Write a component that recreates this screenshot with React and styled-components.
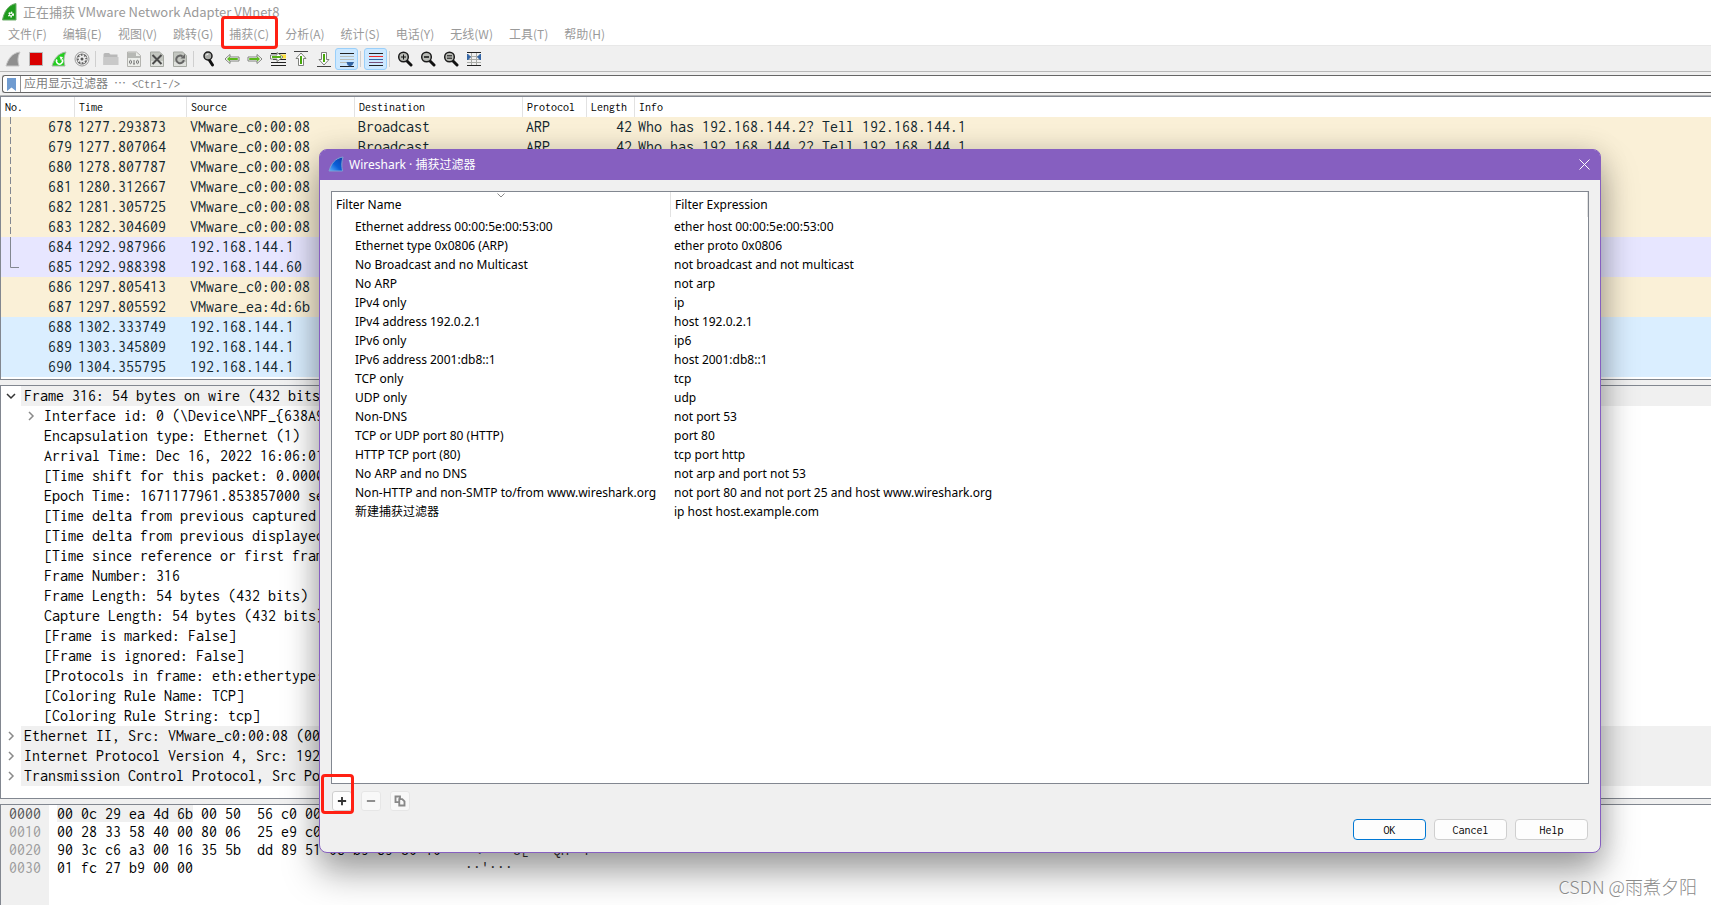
import React, { useState } from 'react'
import styled, { createGlobalStyle, css } from 'styled-components'

const font = {
  ui: '"Noto Sans", "Noto Sans CJK SC", sans-serif',
  cjk: '"Noto Sans CJK SC", sans-serif',
  mono: 'Inconsolata, "Noto Sans Mono CJK SC", "Liberation Mono", "Noto Sans CJK SC", monospace',
}

const color = {
  chrome: '#f0f0f0',
  frame: '#828790',
  purple: '#865fc0',
  faded: '#9a9a9a',
  mark: '#ff2013',
}

const rowColor = {
  arp: '#faf0d7',
  tcp: '#e7e6ff',
  udp: '#daeeff',
}

const menus = ['文件(F)', '编辑(E)', '视图(V)', '跳转(G)', '捕获(C)', '分析(A)', '统计(S)', '电话(Y)', '无线(W)', '工具(T)', '帮助(H)']

const arp = ['Broadcast', 'ARP', 42, 'Who has 192.168.144.2? Tell 192.168.144.1']

const packets = [
  { no: 678, time: '1277.293873', src: 'VMware_c0:00:08', kind: 'arp', link: 'dash', rest: arp },
  { no: 679, time: '1277.807064', src: 'VMware_c0:00:08', kind: 'arp', link: 'dash', rest: arp },
  { no: 680, time: '1278.807787', src: 'VMware_c0:00:08', kind: 'arp', link: 'dash' },
  { no: 681, time: '1280.312667', src: 'VMware_c0:00:08', kind: 'arp', link: 'dash' },
  { no: 682, time: '1281.305725', src: 'VMware_c0:00:08', kind: 'arp', link: 'dash' },
  { no: 683, time: '1282.304609', src: 'VMware_c0:00:08', kind: 'arp', link: 'dash' },
  { no: 684, time: '1292.987966', src: '192.168.144.1', kind: 'tcp', link: 'solid' },
  { no: 685, time: '1292.988398', src: '192.168.144.60', kind: 'tcp', link: 'end' },
  { no: 686, time: '1297.805413', src: 'VMware_c0:00:08', kind: 'arp' },
  { no: 687, time: '1297.805592', src: 'VMware_ea:4d:6b', kind: 'arp' },
  { no: 688, time: '1302.333749', src: '192.168.144.1', kind: 'udp' },
  { no: 689, time: '1303.345809', src: '192.168.144.1', kind: 'udp' },
  { no: 690, time: '1304.355795', src: '192.168.144.1', kind: 'udp' },
]

const details = [
  { text: 'Frame 316: 54 bytes on wire (432 bits)', open: true, top: true },
  { text: 'Interface id: 0 (\\Device\\NPF_{638A9', arrow: true },
  { text: 'Encapsulation type: Ethernet (1)' },
  { text: 'Arrival Time: Dec 16, 2022 16:06:01' },
  { text: '[Time shift for this packet: 0.0000' },
  { text: 'Epoch Time: 1671177961.853857000 sec' },
  { text: '[Time delta from previous captured' },
  { text: '[Time delta from previous displayed' },
  { text: '[Time since reference or first fram' },
  { text: 'Frame Number: 316' },
  { text: 'Frame Length: 54 bytes (432 bits)' },
  { text: 'Capture Length: 54 bytes (432 bits)' },
  { text: '[Frame is marked: False]' },
  { text: '[Frame is ignored: False]' },
  { text: '[Protocols in frame: eth:ethertype:' },
  { text: '[Coloring Rule Name: TCP]' },
  { text: '[Coloring Rule String: tcp]' },
  { text: 'Ethernet II, Src: VMware_c0:00:08 (00', arrow: true, top: true },
  { text: 'Internet Protocol Version 4, Src: 192', arrow: true, top: true },
  { text: 'Transmission Control Protocol, Src Po', arrow: true, top: true },
]

const hexRows = [
  { offset: '0000', picked: '00 0c 29 ea 4d 6b', bytes: ' 00 50  56 c0 00' },
  { offset: '0010', bytes: '00 28 33 58 40 00 80 06  25 e9 c0' },
  { offset: '0020', bytes: '90 3c c6 a3 00 16 35 5b  dd 89 51 08 b9 89 50 10', ascii: ' <    5[   QH  P' },
  { offset: '0030', bytes: '01 fc 27 b9 00 00', ascii: "··'···" },
]

const filters = [
  ['Ethernet address 00:00:5e:00:53:00', 'ether host 00:00:5e:00:53:00'],
  ['Ethernet type 0x0806 (ARP)', 'ether proto 0x0806'],
  ['No Broadcast and no Multicast', 'not broadcast and not multicast'],
  ['No ARP', 'not arp'],
  ['IPv4 only', 'ip'],
  ['IPv4 address 192.0.2.1', 'host 192.0.2.1'],
  ['IPv6 only', 'ip6'],
  ['IPv6 address 2001:db8::1', 'host 2001:db8::1'],
  ['TCP only', 'tcp'],
  ['UDP only', 'udp'],
  ['Non-DNS', 'not port 53'],
  ['TCP or UDP port 80 (HTTP)', 'port 80'],
  ['HTTP TCP port (80)', 'tcp port http'],
  ['No ARP and no DNS', 'not arp and port not 53'],
  ['Non-HTTP and non-SMTP to/from www.wireshark.org', 'not port 80 and not port 25 and host www.wireshark.org'],
  ['新建捕获过滤器', 'ip host host.example.com'],
]

const Icon = ({ children, size = 16 }) => (
  <svg width={size} height={size} viewBox="0 0 16 16" fill="none" aria-hidden="true">
    {children}
  </svg>
)

const finPath = 'M1 15C3 8 7 2 15 1C12.500 6 12.500 10 14 15Z'
const arrowPath = 'M1 8L6 3.500V6H15V10H6V12.500Z'
const arrowCore = 'M3.500 8L5.500 6.200V7.500H13.500V8.500H5.500V9.800Z'
const filePath = 'M1.500 1H10.500L14.500 4.500V15.500H1.500Z'

const Lens = ({ children }) => (
  <Icon>
    <path d="M10 10L14 14" stroke="#111" strokeWidth="3" strokeLinecap="round" />
    <circle cx="6.500" cy="6" r="4.800" fill="#b9bbb6" stroke="#1c1c1c" strokeWidth="1.500" />
    {children}
  </Icon>
)

const icons = {
  start: (
    <Icon>
      <path d={finPath} fill="#8f8f8f" stroke="#c6c6c6" />
    </Icon>
  ),
  stop: (
    <Icon>
      <rect x="1.500" y="1.500" width="13" height="13" fill="#d90000" stroke="#b9b9b9" />
    </Icon>
  ),
  restart: (
    <Icon>
      <path d={finPath} fill="#22cf1d" stroke="#a9b6a8" />
      <path d="M6 8.500A3 3 0 1 0 11 8.500" stroke="#fff" strokeWidth="1.500" />
      <path d="M8.500 5.500L12 6L10 9.500Z" fill="#fff" />
    </Icon>
  ),
  options: (
    <Icon>
      <circle cx="8" cy="8" r="7" fill="#f4f4f4" stroke="#9a9a9a" />
      <circle cx="8" cy="8" r="5.500" fill="#666" />
      <circle cx="8" cy="8" r="3.200" fill="#eee" />
      <circle cx="8" cy="8" r="4" stroke="#eee" strokeWidth="1.500" strokeDasharray="1.600 1.540" />
      <circle cx="8" cy="8" r="1.500" fill="#555" />
    </Icon>
  ),
  open: (
    <Icon>
      <path d="M0.500 3.500Q0.500 2 2 2H6L7.500 3.500H14.500V14H0.500Z" fill="#b8b8b8" />
      <path d="M0.500 6H15.500V14H0.500Z" fill="#c9c9c9" />
    </Icon>
  ),
  save: (
    <Icon>
      <path d={filePath} fill="#eceeea" stroke="#b4b4b0" />
      <path d="M2 1.500H10V5H14V7H2Z" fill="#b7b9b5" />
      <ellipse cx="4.500" cy="11" rx="1" ry="1.700" stroke="#777" />
      <path d="M8 9V13M7 13H9" stroke="#777" />
      <ellipse cx="11.500" cy="11" rx="1" ry="1.700" stroke="#777" />
    </Icon>
  ),
  close: (
    <Icon>
      <path d={filePath} fill="#c3c6c0" stroke="#a5a8a2" />
      <path d="M2 10H14V15H2Z" fill="#dfe1dd" />
      <path d="M3.500 4L12.500 13M12.500 4L3.500 13" stroke="#4b4b4b" strokeWidth="2" />
    </Icon>
  ),
  reload: (
    <Icon>
      <path d={filePath} fill="#c3c6c0" stroke="#a5a8a2" />
      <path d="M2 11H14V15H2Z" fill="#dfe1dd" />
      <path d="M10.500 5.500A3.800 3.800 0 1 0 11.800 9" stroke="#666" strokeWidth="2" />
      <path d="M8.500 7.500H13V3Z" fill="#666" />
    </Icon>
  ),
  find: (
    <Icon>
      <path d="M8 8.500L11.500 14" stroke="#111" strokeWidth="3" strokeLinecap="round" />
      <circle cx="7" cy="5" r="4" fill="#a9aba7" stroke="#1c1c1c" strokeWidth="1.500" />
      <path d="M5 4.500Q5.500 3 7.500 3" stroke="#fff" />
    </Icon>
  ),
  back: (
    <Icon>
      <path d={arrowPath} fill="#fff" stroke="#7f817d" />
      <path d={arrowCore} fill="#48a80c" stroke="#5cb81c" />
    </Icon>
  ),
  forward: (
    <Icon>
      <g transform="rotate(180 8 8)">
        <path d={arrowPath} fill="#fff" stroke="#7f817d" />
        <path d={arrowCore} fill="#48a80c" stroke="#5cb81c" />
      </g>
    </Icon>
  ),
  goto: (
    <Icon>
      <path d="M1 2.500H16M1 11.500H16M1 14.500H16M3 8.500H16" stroke="#222" />
      <path d="M10 5.500H16" stroke="#ffe23c" strokeWidth="4" />
      <path d="M0.500 4H7V1.500L13 6L7 10.500V8H0.500Z" fill="#fff" stroke="#7f817d" />
      <path d="M2 6H11" stroke="#55b315" strokeWidth="2" />
    </Icon>
  ),
  first: (
    <Icon>
      <path d="M1 0.500H15" stroke="#444" />
      <path d="M8 2L13 7.500H10.500V14.500H5.500V7.500H3Z" fill="#fff" stroke="#7f817d" />
      <path d="M8 5V13" stroke="#48a80c" strokeWidth="2" />
    </Icon>
  ),
  last: (
    <Icon>
      <path d="M1 15.500H15" stroke="#444" />
      <path d="M8 14L13 8.500H10.500V1.500H5.500V8.500H3Z" fill="#fff" stroke="#7f817d" />
      <path d="M8 3V11" stroke="#48a80c" strokeWidth="2" />
    </Icon>
  ),
  scroll: (
    <Icon>
      <path d="M1 2.500H15M1 15.500H15" stroke="#222" />
      <path d="M1 5.500H15M1 8.500H15M1 11.500H15" stroke="#babdb6" />
      <path d="M7.500 11H15L13.500 14L11 15.500L8.500 14Z" fill="#3465a4" />
    </Icon>
  ),
  colorize: (
    <Icon>
      <path d="M1 2.500H15M1 14.500H15" stroke="#222" />
      <path d="M1 5.500H15" stroke="#ef2929" />
      <path d="M1 8.500H15" stroke="#3465a4" />
      <path d="M1 11.500H15" stroke="#75507b" />
    </Icon>
  ),
  zoomIn: (
    <Lens>
      <path d="M4 6H9M6.500 3.500V8.500" stroke="#111" />
    </Lens>
  ),
  zoomOut: (
    <Lens>
      <path d="M4 6H9" stroke="#111" strokeWidth="1.500" />
    </Lens>
  ),
  zoomReset: (
    <Lens>
      <path d="M4 4.800H9M4 7.200H9" stroke="#111" />
    </Lens>
  ),
  resize: (
    <Icon>
      <path d="M1 1.500H15M1 14.500H15" stroke="#222" />
      <path d="M1 5.500H15M1 8.500H15M1 11.500H15M5.500 2V14M10.500 2V14" stroke="#a9aba6" />
      <path d="M1.500 3L4.500 6L1.500 9ZM14.500 3L11.500 6L14.500 9Z" fill="#3465a4" stroke="#3465a4" />
    </Icon>
  ),
}

const tools = [
  'start', 'stop', 'restart', 'options', '|',
  'open', 'save', 'close', 'reload', '|',
  'find', 'back', 'forward', 'goto', 'first', 'last', 'scroll', '|',
  'colorize', '|',
  'zoomIn', 'zoomOut', 'zoomReset', 'resize',
]

const GlobalStyle = createGlobalStyle`
  * {
    box-sizing: border-box;
  }
  body {
    margin: 0;
    background: #fff;
    font-family: ${font.ui};
    font-size: 12px;
    color: #000;
  }
  button, input {
    font: inherit;
    color: inherit;
  }
`

function ShortcutTool({ name }) {
  const [on, setOn] = useState(name === 'scroll' || name === 'colorize')
  return (
    <Tool type="button" aria-label={name} $on={on} onClick={() => (name === 'scroll' || name === 'colorize') && setOn(!on)}>
      {icons[name]}
    </Tool>
  )
}

function LinkMark({ kind }) {
  return (
    <svg width="20" height="20" aria-hidden="true">
      {kind === 'dash' && <path d="M9.500 0V20" stroke="#828790" strokeDasharray="7 3" />}
      {kind === 'solid' && <path d="M9.500 0V20" stroke="#828790" />}
      {kind === 'end' && <path d="M9.500 0V10.500H18" stroke="#828790" fill="none" />}
    </svg>
  )
}

function Chevron({ open }) {
  return (
    <svg width="10" height="10" viewBox="0 0 10 10" fill="none" aria-hidden="true">
      {open ? <path d="M1 3L5 7L9 3" stroke="#333" strokeWidth="1.500" /> : <path d="M3 1L7 5L3 9" stroke="#8a8a8a" strokeWidth="1.500" />}
    </svg>
  )
}

function CaptureFilters() {
  return (
    <Dialog role="dialog" aria-labelledby="dialog-title">
      <DialogTitle>
        <svg width="16" height="16" viewBox="0 0 16 16" aria-hidden="true">
          <defs>
            <linearGradient id="fin" x1="0" y1="1" x2="1" y2="0">
              <stop offset="0" stopColor="#5fb4ff" />
              <stop offset="0.450" stopColor="#0a5fd8" />
              <stop offset="1" stopColor="#0a3fa8" />
            </linearGradient>
          </defs>
          <path d="M1 15C3 8 7 2 15 1C13.500 6 13.500 10 14.500 15Z" fill="url(#fin)" stroke="#7f9fd0" />
        </svg>
        <h2 id="dialog-title">Wireshark · 捕获过滤器</h2>
        <CloseButton type="button" aria-label="Close">
          <svg width="11" height="11" viewBox="0 0 11 11" aria-hidden="true">
            <path d="M0.500 0.500L10.500 10.500M10.500 0.500L0.500 10.500" stroke="#fff" />
          </svg>
        </CloseButton>
      </DialogTitle>
      <DialogBody>
        <FilterBox>
          <FilterTable>
            <colgroup>
              <Col $w={339} />
              <col />
            </colgroup>
            <thead>
              <tr>
                <th>
                  Filter Name
                  <SortMark width="8" height="5" viewBox="0 0 8 5" aria-hidden="true">
                    <path d="M0.500 0.500L4 4L7.500 0.500" stroke="#8a8a8a" fill="none" />
                  </SortMark>
                </th>
                <th>Filter Expression</th>
              </tr>
            </thead>
            <tbody>
              {filters.map(([name, expr]) => (
                <tr key={name}>
                  <td>{name}</td>
                  <td>{expr}</td>
                </tr>
              ))}
            </tbody>
          </FilterTable>
        </FilterBox>
        <EditBar>
          <EditButton type="button" aria-label="Add" $strong>
            <Icon size={12}>
              <path d="M8 2.500V13.500M2.500 8H13.500" stroke="#333" strokeWidth="2.500" />
            </Icon>
            <AddMark />
          </EditButton>
          <EditButton type="button" aria-label="Remove">
            <Icon size={12}>
              <path d="M2.500 8H13.500" stroke="#888" strokeWidth="2.500" />
            </Icon>
          </EditButton>
          <EditButton type="button" aria-label="Copy">
            <Icon size={12}>
              <path d="M7 9.500H2V2H8V5M7 5.500H11L14 8.500V14H7Z" stroke="#888" strokeWidth="2.500" />
            </Icon>
          </EditButton>
        </EditBar>
        <Actions>
          <ActionButton type="button" $primary>OK</ActionButton>
          <ActionButton type="button">Cancel</ActionButton>
          <ActionButton type="button">Help</ActionButton>
        </Actions>
      </DialogBody>
    </Dialog>
  )
}

export default function App() {
  const [filter, setFilter] = useState('')

  return (
    <>
      <GlobalStyle />
      <Page>
        <TitleBar>
          <svg width="16" height="18" viewBox="0 0 16 18" aria-hidden="true">
            <path d="M0.500 17C2 9 6 2 14 0.500V17Z" fill="#1f9b1d" stroke="#6fae6c" />
            <circle cx="9" cy="11.500" r="2" fill="none" stroke="#fff" strokeWidth="2" strokeDasharray="1.200 0.900" />
            <circle cx="9" cy="11.500" r="1.500" fill="none" stroke="#fff" />
          </svg>
          <h1>正在捕获 VMware Network Adapter VMnet8</h1>
        </TitleBar>

        <MenuBar>
          {menus.map((m) => (
            <MenuItem key={m} type="button">
              {m}
              {m === '捕获(C)' && <MenuMark />}
            </MenuItem>
          ))}
        </MenuBar>

        <Toolbar>
          {tools.map((t, i) => (t === '|' ? <Divider key={i} /> : <ShortcutTool key={t} name={t} />))}
        </Toolbar>

        <FilterBar>
          <FilterField>
            <Bookmark type="button" aria-label="Bookmark">
              <svg width="9" height="13" viewBox="0 0 9 13" aria-hidden="true">
                <path d="M0 0H9V13L4.500 9.500L0 13Z" fill="#6f9bd0" />
              </svg>
            </Bookmark>
            <input
              aria-label="Display filter"
              placeholder="应用显示过滤器 ⋯ <Ctrl-/>"
              value={filter}
              onChange={(e) => setFilter(e.target.value)}
            />
          </FilterField>
        </FilterBar>

        <PacketPane>
          <PacketTable>
            <colgroup>
              <Col $w={74} />
              <Col $w={112} />
              <Col $w={168} />
              <Col $w={168} />
              <Col $w={64} />
              <Col $w={48} />
              <col />
            </colgroup>
            <thead>
              <tr>
                <th>No.</th>
                <th>Time</th>
                <th>Source</th>
                <th>Destination</th>
                <th>Protocol</th>
                <th>Length</th>
                <th>Info</th>
              </tr>
            </thead>
            <tbody>
              {packets.map((p) => {
                const [dst, proto, len, info] = p.rest || []
                return (
                  <PacketRow key={p.no} $kind={p.kind}>
                    <NumberCell>
                      <div>
                        <LinkMark kind={p.link} />
                        {p.no}
                      </div>
                    </NumberCell>
                    <td>{p.time}</td>
                    <td>{p.src}</td>
                    <td>{dst}</td>
                    <td>{proto}</td>
                    <LengthCell>{len}</LengthCell>
                    <td>{info}</td>
                  </PacketRow>
                )
              })}
            </tbody>
          </PacketTable>
        </PacketPane>

        <DetailPane>
          {details.map((d) => (
            <DetailRow key={d.text} $top={d.top}>
              <ArrowSlot>{(d.open || d.arrow) && <Chevron open={d.open} />}</ArrowSlot>
              <DetailText $top={d.top}>{d.text}</DetailText>
            </DetailRow>
          ))}
        </DetailPane>

        <HexPane>
          <Offsets>
            {hexRows.map((r, i) => (
              <Offset key={r.offset} $current={i === 0}>{r.offset}</Offset>
            ))}
          </Offsets>
          <Bytes>
            {hexRows.map((r) => (
              <HexRow key={r.offset}>
                <HexBytes>
                  {r.picked && <Picked>{r.picked}</Picked>}
                  {r.bytes}
                </HexBytes>
                <Ascii>{r.ascii}</Ascii>
              </HexRow>
            ))}
          </Bytes>
        </HexPane>

        <CaptureFilters />
        <Watermark>CSDN @雨煮夕阳</Watermark>
      </Page>
    </>
  )
}

const Page = styled.div`
  position: relative;
  display: flex;
  flex-direction: column;
  height: 100vh;
  overflow: hidden;
  background: ${color.chrome};
`

const TitleBar = styled.header`
  display: flex;
  align-items: center;
  gap: 5px;
  height: 23px;
  padding: 0 2px;
  background: #fff;
  h1 {
    margin: 0;
    font: 400 13px/20px ${font.cjk};
    color: ${color.faded};
  }
`

const MenuBar = styled.nav`
  display: flex;
  gap: 16px;
  height: 23px;
  padding: 0 8px;
  background: #fff;
  border-bottom: 1px solid #e8e8e8;
`

const mark = css`
  position: absolute;
  border: 3px solid ${color.mark};
  border-radius: 4px;
  pointer-events: none;
`

const MenuItem = styled.button`
  position: relative;
  padding: 0;
  border: 0;
  background: none;
  font-family: ${font.cjk};
  line-height: 20px;
  color: ${color.faded};
`

const MenuMark = styled.span`
  ${mark}
  inset: -7px -9px -4px -8px;
`

const Toolbar = styled.div`
  display: flex;
  align-items: center;
  height: 26px;
  padding: 0 1px;
  border-bottom: 1px solid #b8b8b8;
`

const Tool = styled.button`
  display: flex;
  align-items: center;
  justify-content: center;
  width: 23px;
  height: 22px;
  padding: 0;
  border: 1px solid ${(p) => (p.$on ? '#99cffa' : 'transparent')};
  border-radius: 3px;
  background: ${(p) => (p.$on ? '#cce8ff' : 'none')};
`

const Divider = styled.span`
  width: 1px;
  height: 16px;
  margin: 0 3px 0 2px;
  background: #cfcfcf;
`

const FilterBar = styled.div`
  padding: 3px 0 2px 2px;
  border-bottom: 1px solid #b5b5b5;
`

const FilterField = styled.label`
  display: flex;
  height: 18px;
  border: 1px solid #666;
  border-right: 0;
  border-radius: 3px 0 0 3px;
  background: #fff;
  input {
    flex: 1;
    padding: 0 3px;
    border: 0;
    outline: 0;
    background: none;
    font-family: ${font.mono};
    line-height: 16px;
  }
  input::placeholder {
    color: #7d7d7d;
  }
`

const Bookmark = styled.button`
  display: flex;
  align-items: center;
  justify-content: center;
  width: 18px;
  padding: 0;
  border: 0;
  border-right: 1px solid #8f8f8f;
  background: none;
`

const PacketPane = styled.section`
  margin-bottom: 5px;
  padding-bottom: 2px;
  border: 1px solid ${color.frame};
  border-right: 0;
  background: #fff;
`

const PacketTable = styled.table`
  width: 100%;
  table-layout: fixed;
  border-spacing: 0;
  th {
    height: 20px;
    padding: 0 4px;
    border-right: 1px solid #e2e2e2;
    font: 400 12px/20px ${font.mono};
    text-align: left;
  }
  th:last-child {
    border-right: 0;
  }
  td {
    height: 20px;
    padding: 0 3px;
    font: 16px/20px ${font.mono};
    color: #12272e;
    white-space: nowrap;
  }
`

const Col = styled.col`
  width: ${(p) => p.$w}px;
`

const PacketRow = styled.tr`
  background: ${(p) => rowColor[p.$kind]};
`

const NumberCell = styled.td`
  && {
    padding-left: 0;
  }
  div {
    display: flex;
    justify-content: space-between;
    height: 20px;
  }
`

const LengthCell = styled.td`
  text-align: right;
`

const DetailPane = styled.section`
  margin-bottom: 5px;
  padding-bottom: 12px;
  border: 1px solid ${color.frame};
  border-right: 0;
  background: #fff;
`

const DetailRow = styled.div`
  display: flex;
  height: 20px;
  padding-left: ${(p) => (p.$top ? 0 : 20)}px;
`

const ArrowSlot = styled.span`
  display: flex;
  align-items: center;
  justify-content: flex-end;
  width: 20px;
  padding-right: 5px;
`

const DetailText = styled.span`
  flex: 1;
  padding-left: 3px;
  background: ${(p) => (p.$top ? color.chrome : 'none')};
  font: 16px/20px ${font.mono};
  white-space: pre;
`

const HexPane = styled.section`
  display: flex;
  flex: 1;
  min-height: 0;
  border: solid ${color.frame};
  border-width: 1px 0 0 1px;
  background: #fff;
  font: 16px/18px ${font.mono};
`

const Offsets = styled.div`
  width: 48px;
  padding-left: 8px;
  background: ${color.chrome};
`

const Offset = styled.div`
  color: ${(p) => (p.$current ? '#555' : '#9c9c9c')};
`

const Bytes = styled.div`
  padding-left: 8px;
  white-space: pre;
`

const HexRow = styled.div`
  display: flex;
`

const HexBytes = styled.span`
  width: 408px;
`

const Picked = styled.span`
  background: ${color.chrome};
`

const Ascii = styled.span`
  color: #333;
`

const Dialog = styled.section`
  position: absolute;
  top: 149px;
  right: 110px;
  bottom: 52px;
  left: 319px;
  display: flex;
  flex-direction: column;
  border: 1px solid ${color.purple};
  border-radius: 8px;
  background: ${color.chrome};
  box-shadow: 0 20px 36px rgba(0, 0, 0, 0.34), 0 2px 30px rgba(0, 0, 0, 0.14);
`

const DialogTitle = styled.header`
  display: flex;
  align-items: center;
  gap: 5px;
  height: 30px;
  padding: 0 10px 2px 8px;
  border-radius: 6px 6px 0 0;
  background: ${color.purple};
  h2 {
    flex: 1;
    margin: 0;
    font-size: 12px;
    font-weight: 400;
    color: #fff;
  }
`

const CloseButton = styled.button`
  display: flex;
  padding: 0;
  border: 0;
  background: none;
`

const DialogBody = styled.div`
  display: flex;
  flex: 1;
  flex-direction: column;
  min-height: 0;
  padding: 11px 11px 12px;
`

const FilterBox = styled.div`
  flex: 1;
  min-height: 0;
  border: 1px solid ${color.frame};
  background: #fff;
`

const FilterTable = styled.table`
  width: 100%;
  table-layout: fixed;
  border-spacing: 0;
  th {
    position: relative;
    height: 25px;
    padding: 0 4px;
    border-right: 1px solid #e2e2e2;
    font-weight: 400;
    text-align: left;
  }
  td {
    height: 19px;
    padding: 0 3px;
    line-height: 19px;
    white-space: nowrap;
  }
  td:first-child {
    padding: 0 0 0 23px;
  }
`

const SortMark = styled.svg`
  position: absolute;
  top: 1px;
  left: 50%;
  margin-left: -4px;
`

const EditBar = styled.div`
  display: flex;
  gap: 9px;
  margin-top: 7px;
  padding-left: 1px;
`

const EditButton = styled.button`
  position: relative;
  display: flex;
  align-items: center;
  justify-content: center;
  width: 20px;
  height: 20px;
  padding: 0;
  border: 1px solid ${(p) => (p.$strong ? '#cfcfcf' : '#e6e6e6')};
  border-radius: 3px;
  background: ${(p) => (p.$strong ? '#fdfdfd' : '#f8f8f8')};
`

const AddMark = styled.span`
  ${mark}
  inset: -18px -3px -4px -12px;
`

const Actions = styled.div`
  display: flex;
  justify-content: flex-end;
  gap: 8px;
  margin-top: 8px;
  padding-right: 1px;
`

const ActionButton = styled.button`
  width: 73px;
  height: 21px;
  padding: 0;
  border: 1px solid ${(p) => (p.$primary ? '#0078d4' : '#cfcfcf')};
  border-radius: 4px;
  background: #fdfdfd;
  font-family: ${font.mono};
`

const Watermark = styled.div`
  position: absolute;
  right: 14px;
  bottom: 5px;
  font: 300 18px/28px ${font.cjk};
  color: #8a8a8a;
  text-shadow: 1px 1px 1px #fff;
`
